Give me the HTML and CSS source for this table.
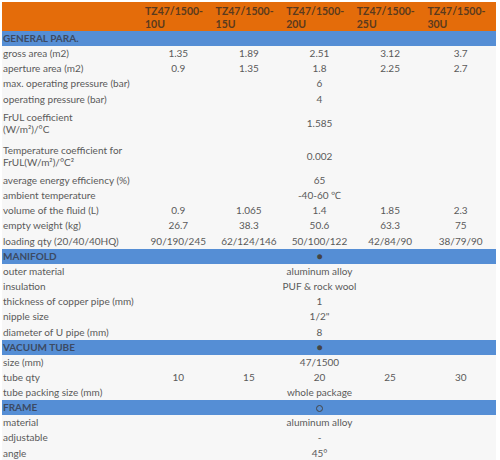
FILE: index.html
```
<!DOCTYPE html>
<html lang="en">
<head>
  <meta charset="UTF-8">
  <meta name="viewport" content="width=device-width, initial-scale=1.0">
  <title>TZ47/1500 Specification</title>
  <link rel="stylesheet" href="styles.css">
</head>
<body>
  <table class="spec">
    <colgroup>
      <col class="col-label">
      <col><col><col><col><col>
    </colgroup>
    <thead>
      <tr class="model-row">
        <th></th>
        <th>TZ47/1500-<br>10U</th>
        <th>TZ47/1500-<br>15U</th>
        <th>TZ47/1500-<br>20U</th>
        <th>TZ47/1500-<br>25U</th>
        <th>TZ47/1500-<br>30U</th>
      </tr>
    </thead>
    <tbody>
      <!-- General -->
      <tr class="section"><td>GENERAL PARA.</td><td colspan="5"></td></tr>
      <tr><td>gross area (m2)</td><td>1.35</td><td>1.89</td><td>2.51</td><td>3.12</td><td>3.7</td></tr>
      <tr><td>aperture area (m2)</td><td>0.9</td><td>1.35</td><td>1.8</td><td>2.25</td><td>2.7</td></tr>
      <tr><td>max. operating pressure (bar)</td><td colspan="5">6</td></tr>
      <tr><td>operating pressure (bar)</td><td colspan="5">4</td></tr>
      <tr class="tall"><td>FrUL coefficient<br>(W/m²)/°C</td><td colspan="5">1.585</td></tr>
      <tr class="tall"><td>Temperature coefficient for<br>FrUL(W/m²)/°C²</td><td colspan="5">0.002</td></tr>
      <tr><td>average energy efficiency (%)</td><td colspan="5">65</td></tr>
      <tr><td>ambient temperature</td><td colspan="5">-40-60 ℃</td></tr>
      <tr><td>volume of the fluid (L)</td><td>0.9</td><td>1.065</td><td>1.4</td><td>1.85</td><td>2.3</td></tr>
      <tr><td>empty weight (kg)</td><td>26.7</td><td>38.3</td><td>50.6</td><td>63.3</td><td>75</td></tr>
      <tr><td>loading qty (20/40/40HQ)</td><td>90/190/245</td><td>62/124/146</td><td>50/100/122</td><td>42/84/90</td><td>38/79/90</td></tr>

      <!-- Manifold -->
      <tr class="section"><td>MANIFOLD</td><td colspan="5">●</td></tr>
      <tr><td>outer material</td><td colspan="5">aluminum alloy</td></tr>
      <tr><td>insulation</td><td colspan="5">PUF &amp; rock wool</td></tr>
      <tr><td>thickness of copper pipe (mm)</td><td colspan="5">1</td></tr>
      <tr><td>nipple size</td><td colspan="5">1/2"</td></tr>
      <tr><td>diameter of U pipe (mm)</td><td colspan="5">8</td></tr>

      <!-- Vacuum tube -->
      <tr class="section"><td>VACUUM TUBE</td><td colspan="5">●</td></tr>
      <tr><td>size (mm)</td><td colspan="5">47/1500</td></tr>
      <tr><td>tube qty</td><td>10</td><td>15</td><td>20</td><td>25</td><td>30</td></tr>
      <tr><td>tube packing size (mm)</td><td colspan="5">whole package</td></tr>

      <!-- Frame -->
      <tr class="section"><td>FRAME</td><td colspan="5"><span class="ring"></span></td></tr>
      <tr><td>material</td><td colspan="5">aluminum alloy</td></tr>
      <tr><td>adjustable</td><td colspan="5">-</td></tr>
      <tr><td>angle</td><td colspan="5">45°</td></tr>
    </tbody>
  </table>
</body>
</html>
```
FILE: styles.css
```
/* Page */
body {
  margin: 0;
  padding: 2px;
  background: #fff;
  font-family: Lato, "Open Sans", sans-serif;
  font-size: 10px;
  color: #5a5a5a;
}

/* Spec table */
.spec {
  width: 494px;
  table-layout: fixed;
  border-collapse: collapse;
  border-spacing: 0;
}

.spec .col-label {
  width: 141px;
}

.spec td {
  height: 15.2px;
  padding: 0 1px;
  line-height: 11px;
  text-align: center;
  background: #f7f7f7;
}

.spec td:first-child {
  text-align: left;
  padding-left: 1px;
}

/* Orange model header */
.model-row th {
  height: 28px;
  padding: 3px 2px 0;
  background: #e46c0a;
  color: #5a3a1e;
  font-size: 10.5px;
  font-weight: bold;
  line-height: 13px;
  text-align: left;
  vertical-align: top;
  box-sizing: border-box;
}

/* Blue section bands */
.spec .section td {
  height: 15px;
  background: #558ed5;
  color: #444;
}

.spec .section td:first-child {
  font-weight: bold;
  color: #3c4a63;
}

/* hollow marker for the frame row */
.ring {
  display: inline-block;
  width: 5px;
  height: 5px;
  border: 1px solid #444;
  border-radius: 50%;
  vertical-align: middle;
}

/* Two-line rows */
.spec .tall td {
  height: 33px;
  line-height: 12px;
}
```
